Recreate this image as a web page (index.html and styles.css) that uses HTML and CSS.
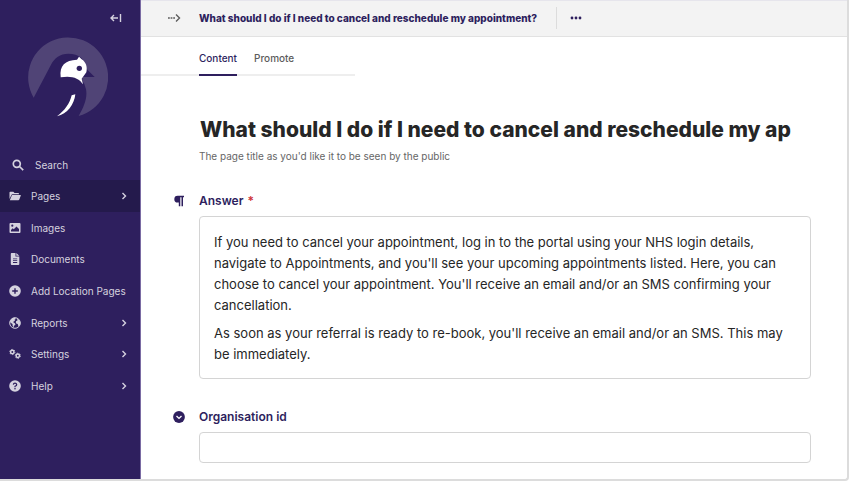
FILE: index.html
```html
<!DOCTYPE html>
<html lang="en">
<head>
<meta charset="utf-8">
<meta name="viewport" content="width=device-width, initial-scale=1">
<title>Edit page</title>
<link rel="stylesheet" href="styles.css">
</head>
<body>
<div class="app">
  <aside class="sidebar">
    <div class="sidebar-top">
      <button class="collapse" type="button" aria-label="Collapse menu">
        <svg width="12" height="10" viewBox="0 0 12 10" fill="none" stroke="currentColor" stroke-width="1.4"><path d="M8 5H1M4 2 1 5l3 3M10.500 1v8"/></svg>
      </button>
    </div>
    <a class="logo" href="#" aria-label="Dashboard">
      <svg width="80" height="80" viewBox="84 110 240 240">
        <path fill="#504476" d="M101 292A120 120 0 1 1 236 347C252 320 263 292 258 267Q254 249 246 239L248 230H284L262 208C256 176 237 160 205 160C180 160 164 173 153 193Z"/>
        <path fill="#fff" d="M182 229C178 196 195 179 231 178L237 169L245 177C258 185 263 200 259 216L245 235L249 252C237 233 214 225 182 231Z"/>
        <circle cx="238" cy="204" r="8" fill="#2e1f5e"/>
        <path fill="#fff" d="M215 285 226 282C223 312 202 341 171 348C195 330 209 310 215 285Z"/>
      </svg>
    </a>
    <button class="search" type="button">
      <svg width="12" height="12" viewBox="0 0 12 12" fill="none" stroke="currentColor" stroke-width="1.700"><circle cx="4.800" cy="4.800" r="3.500"/><path d="m7.500 7.500 3.700 3.700"/></svg>
      <span>Search</span>
    </button>
    <nav class="menu" aria-label="Main menu">
      <a class="item active" href="#">
        <svg class="icon" viewBox="0 0 12 12" fill="currentColor"><path d="M.5 9V2.500q0-.8.8-.8h3l1.200 1.200h3.700q.8 0 .8.800v.6H3.500q-.8 0-1.100.7L.5 9zM3 5h8.500q.5 0 .3.500L10.300 9.600q-.3.700-1 .7H.8z"/></svg>
        <span>Pages</span>
        <svg class="chev" viewBox="0 0 6 8"><path d="m1.500 1 3 3-3 3"/></svg>
      </a>
      <a class="item" href="#">
        <svg class="icon" viewBox="0 0 12 12" fill="currentColor"><path fill-rule="evenodd" d="M1.500 1h9q1 0 1 1v8q0 1-1 1h-9q-1 0-1-1V2q0-1 1-1zm1.800 1.600a1.100 1.100 0 1 0 0 2.200 1.100 1.100 0 0 0 0-2.200zM2 9.500h8V7L7.500 4.500 4.800 7.200 3.700 6.200 2 8z"/></svg>
        <span>Images</span>
      </a>
      <a class="item" href="#">
        <svg class="icon" viewBox="0 0 12 12" fill="currentColor"><path fill-rule="evenodd" d="M2.500 0H6.500v3.500H10.300V11q0 1-1 1h-6.500q-1 0-1-1V1q0-1 .7-1zM7.300 0 10.300 2.800H7.300zM4 5.500v.8h4.200v-.8zM4 7.300v.8h4.200v-.8zM4 9.100v.8h4.200v-.8z"/></svg>
        <span>Documents</span>
      </a>
      <a class="item" href="#">
        <svg class="icon" viewBox="0 0 12 12"><circle cx="6" cy="6" r="5.800" fill="currentColor"/><path d="M6 3.200v5.600M3.200 6h5.600" stroke="#2e1f5e" stroke-width="1.400"/></svg>
        <span>Add Location Pages</span>
      </a>
      <a class="item" href="#">
        <svg class="icon" viewBox="0 0 12 12"><circle cx="6" cy="6" r="5.300" fill="none" stroke="currentColor" stroke-width="1"/><path fill="currentColor" d="M1 4.200C2 1.800 4 .7 6 .8l.8 1.200-1.300.8.5 1-2 1.300 1.800 1.100.7 1.200-1.600 1.700-.3 1.800-1-2.200-.1-1.700L1.300 5.500zM7.800 1.500l2.200 1.200 1.300 2.500-.2 2.600-1.600 1.600-.8-2.400-1.900-.8.2-2 1.600-.9z"/></svg>
        <span>Reports</span>
        <svg class="chev" viewBox="0 0 6 8"><path d="m1.500 1 3 3-3 3"/></svg>
      </a>
      <a class="item" href="#">
        <svg class="icon" viewBox="0 0 12 12" fill="none" stroke="currentColor"><circle cx="3.300" cy="4" r="1.700" stroke-width="1.500"/><circle cx="3.300" cy="4" r="2.600" stroke-width=".9" stroke-dasharray="1.360"/><circle cx="8.800" cy="7.800" r="1.700" stroke-width="1.500"/><circle cx="8.800" cy="7.800" r="2.600" stroke-width=".9" stroke-dasharray="1.360"/></svg>
        <span>Settings</span>
        <svg class="chev" viewBox="0 0 6 8"><path d="m1.500 1 3 3-3 3"/></svg>
      </a>
      <a class="item" href="#">
        <svg class="icon" viewBox="0 0 12 12"><circle cx="6" cy="6" r="5.800" fill="currentColor"/><path d="M4.300 4.700Q4.500 3.200 6 3.200T7.700 4.700Q7.700 5.500 6 6.300V7.200" fill="none" stroke="#2e1f5e" stroke-width="1.200"/><circle cx="6" cy="8.800" r=".8" fill="#2e1f5e"/></svg>
        <span>Help</span>
        <svg class="chev" viewBox="0 0 6 8"><path d="m1.500 1 3 3-3 3"/></svg>
      </a>
    </nav>
  </aside>
  <main class="main">
    <header class="topbar">
      <button class="crumbs" type="button" aria-label="Show breadcrumbs">
        <svg width="14" height="8" viewBox="0 0 14 8" fill="none" stroke="currentColor" stroke-width="1.400"><path d="M1 4h7" stroke-dasharray="1.800 .8"/><path d="m9 .5 3.500 3.500L9 7.500"/></svg>
      </button>
      <a class="crumb-title" href="#">What should I do if I need to cancel and reschedule my appointment?</a>
      <button class="more" type="button" aria-label="Actions">
        <svg width="12" height="4" viewBox="0 0 12 4" fill="currentColor"><circle cx="2" cy="2" r="1.400"/><circle cx="6" cy="2" r="1.400"/><circle cx="10" cy="2" r="1.400"/></svg>
      </button>
    </header>
    <div class="tabs" role="tablist">
      <a class="tab selected" role="tab" aria-selected="true" href="#">Content</a>
      <a class="tab" role="tab" aria-selected="false" href="#">Promote</a>
    </div>
    <form class="form">
      <input class="title" type="text" aria-label="Title" aria-describedby="title-help" value="What should I do if I need to cancel and reschedule my appointment?">
      <p class="help" id="title-help">The page title as you'd like it to be seen by the public</p>
      <section class="panel">
        <h2 class="label" id="answer-label">
          <svg class="label-icon" viewBox="0 0 12 12"><path fill="currentColor" d="M11 .8v1.500H10V11.200H8.500V2.300H7.300V11.200H5.800V7.600H4.700A3.400 3.400 0 0 1 4.700.8z"/></svg>
          Answer <span class="required">*</span>
        </h2>
        <div class="editor" contenteditable="true" spellcheck="false" role="textbox" aria-multiline="true" aria-labelledby="answer-label">
          <p>If you need to cancel your appointment, log in to the portal using your NHS login details, navigate to Appointments, and you'll see your upcoming appointments listed. Here, you can choose to cancel your appointment. You'll receive an email and/or an SMS confirming your cancellation.</p>
          <p>As soon as your referral is ready to re-book, you'll receive an email and/or an SMS. This may be immediately.</p>
        </div>
      </section>
      <section class="panel">
        <label class="label" for="org">
          <svg class="label-icon" viewBox="0 0 12 12"><circle cx="6" cy="6" r="5.900" fill="currentColor"/><path d="M3.500 5 6 7.400 8.500 5" fill="none" stroke="#fff" stroke-width="1.400"/></svg>
          Organisation id
        </label>
        <input class="text" id="org" type="text">
      </section>
    </form>
  </main>
</div>
</body>
</html>
```

FILE: styles.css
```css
* {
  box-sizing: border-box;
}

body {
  margin: 0;
  background: #fff;
  color: #262626;
  font-family: Inter, "Liberation Sans", sans-serif;
  font-size: 10px;
}

button {
  border: 0;
  padding: 0;
  background: none;
  color: inherit;
  font: inherit;
}

a {
  color: inherit;
  text-decoration: none;
}

svg {
  display: block;
  flex: none;
}

.app {
  display: flex;
  min-height: calc(100vh - 3px);
  margin-right: 4px;
  border-right: 2px solid #dcdcdc;
  border-bottom: 2px solid #dcdcdc;
  border-radius: 0 0 4px 0;
}

.sidebar {
  flex: none;
  width: 141px;
  border-right: 1px solid #7a6ba3;
  background: #2e1f5e;
  color: #d5d2df;
}

.sidebar-top {
  display: flex;
  justify-content: flex-end;
  padding: 13px 18px 0 0;
}

.collapse {
  height: 10px;
}

.logo {
  display: block;
  width: 80px;
  margin: 14px 0 0 28px;
}

.search {
  display: flex;
  align-items: center;
  gap: 11px;
  width: 100%;
  height: 30px;
  margin-top: 33px;
  padding-left: 12px;
}

.menu {
  display: grid;
  grid-auto-rows: 1fr;
  height: 222px;
}

.item {
  display: flex;
  align-items: center;
  gap: 10px;
  padding: 0 13px 0 9px;
  white-space: nowrap;
}

.item.active {
  background: #241a4c;
}

.icon {
  width: 12px;
  height: 12px;
}

.chev {
  width: 6px;
  height: 8px;
  margin-left: auto;
  fill: none;
  stroke: currentColor;
  stroke-width: 1.4;
}

.main {
  flex: 1;
  min-width: 0;
}

.topbar {
  display: flex;
  align-items: center;
  height: 37px;
  padding: 0 0 2px 26px;
  border-top: 1px solid #e6e5ec;
  border-bottom: 1px solid #e2e2e2;
  background: #f3f3f3;
  color: #2e1f5e;
}

.crumbs {
  width: 32px;
  color: #5c5c5c;
}

.crumb-title {
  font-weight: 800;
}

.more {
  display: flex;
  align-items: center;
  height: 22px;
  margin-left: 19px;
  padding-left: 13px;
  border-left: 1px solid #dcdcdc;
}

.tabs {
  display: flex;
  gap: 17px;
  width: 214px;
  padding-left: 58px;
  border-bottom: 2px solid #eee;
}

.tab {
  height: 39px;
  margin-bottom: -2px;
  padding-top: 13px;
  color: #5c5c5c;
  font-weight: 500;
  line-height: 16px;
}

.tab.selected {
  border-bottom: 2px solid #2e1f5e;
  color: #2e1f5e;
}

.form {
  padding: 38px 36px 15px 58px;
}

.title {
  display: block;
  width: 100%;
  height: 32px;
  padding: 0 20px 0 1px;
  border: 0;
  background: none;
  color: #262626;
  font: 800 21px/32px Inter, "Liberation Sans", sans-serif;
}

.help {
  margin: 3px 0 0;
  color: #666;
  line-height: 14px;
}

.panel {
  margin-top: 30px;
}

.label {
  display: flex;
  align-items: center;
  gap: 4px;
  margin: 0 0 7px -26px;
  color: #2e1f5e;
  font-size: 12px;
  font-weight: 600;
  line-height: 16px;
}

.label-icon {
  width: 12px;
  height: 12px;
  margin-right: 10px;
}

.required {
  color: #cd3238;
}

.editor,
.text {
  display: block;
  width: 100%;
  border: 1px solid #d4d4d4;
  border-radius: 4px;
  background: #fff;
  color: #262626;
  font-family: inherit;
  font-size: 13px;
  line-height: 21px;
}

.editor {
  padding: 15px 14px 13px;
}

.editor p {
  margin: 0;
}

.editor p + p {
  margin-top: 7px;
}

.text {
  height: 31px;
  padding: 0 14px;
}
```
